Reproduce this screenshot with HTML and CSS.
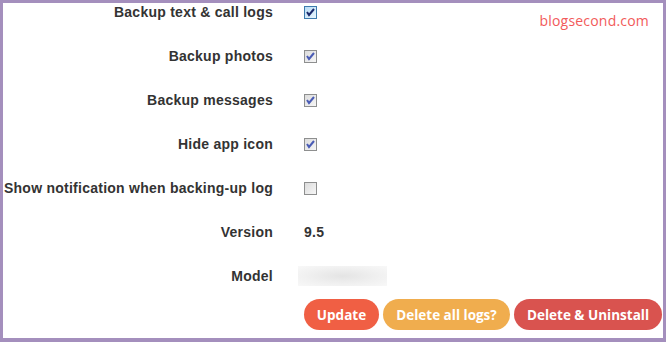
FILE: index.html
```html
<!DOCTYPE html>
<html lang="en">
  <head>
    <meta charset="UTF-8" />
    <meta name="viewport" content="width=device-width, initial-scale=1.0" />
    <title>Settings</title>
    <link rel="stylesheet" href="styles.css">
  </head>
  <body>
    <div class="frame">
      <div class="watermark">blogsecond.com</div>

      <div class="settings">
        <div class="label">Backup text &amp; call logs</div>
        <div class="value">
          <span class="check check-focus">
            <svg width="11" height="11" viewBox="0 0 11 11"><path d="M2 5 L4 8 L9 2" /></svg>
          </span>
        </div>

        <div class="label">Backup photos</div>
        <div class="value">
          <span class="check">
            <svg width="11" height="11" viewBox="0 0 11 11"><path d="M2 5 L4 8 L9 2" /></svg>
          </span>
        </div>

        <div class="label">Backup messages</div>
        <div class="value">
          <span class="check">
            <svg width="11" height="11" viewBox="0 0 11 11"><path d="M2 5 L4 8 L9 2" /></svg>
          </span>
        </div>

        <div class="label">Hide app icon</div>
        <div class="value">
          <span class="check">
            <svg width="11" height="11" viewBox="0 0 11 11"><path d="M2 5 L4 8 L9 2" /></svg>
          </span>
        </div>

        <div class="label">Show notification when backing-up log</div>
        <div class="value">
          <span class="check check-empty"></span>
        </div>

        <div class="label">Version</div>
        <div class="value">9.5</div>

        <div class="label">Model</div>
        <div class="value"><span class="blurred"></span></div>
      </div>

      <div class="actions">
        <button type="button" class="btn btn-update">Update</button>
        <button type="button" class="btn btn-logs">Delete all logs?</button>
        <button type="button" class="btn btn-uninstall">Delete &amp; Uninstall</button>
      </div>
    </div>
  </body>
</html>
```

FILE: styles.css
```css
html,
body {
  margin: 0;
  padding: 0;
}

body {
  width: 666px;
  height: 342px;
  background-color: #a48fbd;
  font-family: "Liberation Sans", Arial, sans-serif;
}

.frame {
  position: relative;
  margin: 3px 3px 0 3px;
  width: 660px;
  height: 335px;
  background-color: #fff;
}

.watermark {
  position: absolute;
  top: 8px;
  right: 14px;
  color: #f25a5a;
  font-family: "Open Sans", sans-serif;
  font-size: 14px;
  letter-spacing: 0.2px;
}

.settings {
  display: grid;
  grid-template-columns: 270px auto;
  column-gap: 31px;
  row-gap: 26px;
}

.label,
.value {
  height: 18px;
  display: flex;
  align-items: center;
  font-size: 14px;
  font-weight: bold;
  color: #333;
  letter-spacing: 0.25px;
}

.label {
  justify-content: flex-end;
  white-space: nowrap;
}

.check {
  width: 11px;
  height: 11px;
  border: 1px solid #8e8f8f;
  background: linear-gradient(135deg, #dcdcdc, #f6f6f6);
  display: inline-block;
}

.check svg {
  display: block;
}

.check path {
  fill: none;
  stroke: #4a5cb5;
  stroke-width: 2;
}

.check-focus {
  border-color: #3d7bad;
  background: linear-gradient(135deg, #b8dcf5, #eaf6fd);
}

.check-focus path {
  stroke: #1a2a6c;
}

.blurred {
  display: inline-block;
  width: 89px;
  height: 20px;
  margin-left: -6px;
  background: radial-gradient(ellipse at center, #e4e4e4 0%, #f1f1f1 60%, #f8f8f8 100%);
}

.actions {
  display: flex;
  gap: 4px;
  margin-top: 14px;
  margin-left: 301px;
}

.btn {
  flex-shrink: 0;
  height: 31px;
  padding: 0;
  border: none;
  border-radius: 16px;
  color: #fff;
  font-family: "Open Sans", sans-serif;
  font-size: 13.5px;
  font-weight: bold;
  white-space: nowrap;
  text-align: center;
}

.btn-update {
  width: 75px;
  background-color: #f05f44;
}

.btn-logs {
  width: 127px;
  background-color: #f0ad4e;
}

.btn-uninstall {
  width: 148px;
  background-color: #d9534f;
}
```
